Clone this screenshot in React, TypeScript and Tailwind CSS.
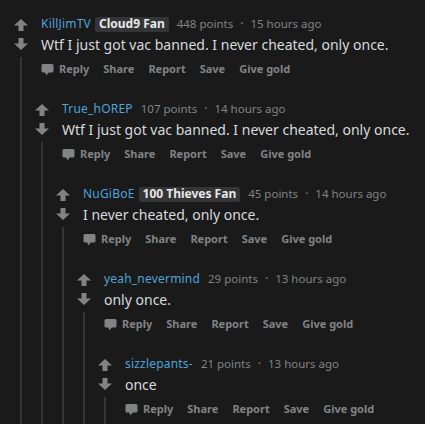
import React from "react";

type CommentData = {
  author: string;
  flair?: string;
  points: number;
  time: string;
  body: string;
  child?: CommentData;
};

const thread: CommentData = {
  author: "KillJimTV",
  flair: "Cloud9 Fan",
  points: 448,
  time: "15 hours ago",
  body: "Wtf I just got vac banned. I never cheated, only once.",
  child: {
    author: "True_hOREP",
    points: 107,
    time: "14 hours ago",
    body: "Wtf I just got vac banned. I never cheated, only once.",
    child: {
      author: "NuGiBoE",
      flair: "100 Thieves Fan",
      points: 45,
      time: "14 hours ago",
      body: "I never cheated, only once.",
      child: {
        author: "yeah_nevermind",
        points: 29,
        time: "13 hours ago",
        body: "only once.",
        child: {
          author: "sizzlepants-",
          points: 21,
          time: "13 hours ago",
          body: "once",
        },
      },
    },
  },
};

const UpArrow = () => (
  <svg width="14" height="12" viewBox="0 0 14 12" className="block">
    <path d="M7 0 L14 6.5 H9.5 V12 H4.5 V6.5 H0 Z" fill="#818384" />
  </svg>
);

const DownArrow = () => (
  <svg width="14" height="12" viewBox="0 0 14 12" className="block">
    <path d="M7 12 L14 5.5 H9.5 V0 H4.5 V5.5 H0 Z" fill="#818384" />
  </svg>
);

const ReplyIcon = () => (
  <svg width="13" height="13" viewBox="0 0 13 13" className="block">
    <rect x="0.5" y="1" width="12" height="8.5" rx="1.5" fill="#818384" />
    <path d="M4 9 H8 L5.5 12.5 Z" fill="#818384" />
  </svg>
);

const Comment = ({ data, last }: { data: CommentData; last?: boolean }) => {
  return (
    <div className="flex">
      <div className="w-[20px] shrink-0 flex flex-col items-center pt-[5px]">
        <UpArrow />
        <div className="mt-[7px]">
          <DownArrow />
        </div>
        <div className="mt-[7px] w-[2px] flex-1 bg-[#343536]" />
      </div>
      <div className="flex-1 min-w-0">
        <div className="pl-[10px] h-[20px] flex items-center text-[12px] whitespace-nowrap">
          <span className="text-[#4fa3d9] tracking-[0.2px]">{data.author}</span>
          {data.flair && (
            <span className="ml-[4px] px-[4px] h-[15px] flex items-center rounded-[2px] bg-[#343536] text-[#e8e8e8] font-bold">
              {data.flair}
            </span>
          )}
          <span className="ml-[8px] text-[11.5px] text-[#818384]">{data.points} points</span>
          <span className="mx-[7px] text-[#818384]">·</span>
          <span className="text-[11.5px] text-[#818384]">{data.time}</span>
        </div>
        <div className="pl-[10px] h-[20px] flex items-center text-[14px] text-[#d7dadc] whitespace-nowrap">
          {data.body}
        </div>
        <div className="pl-[10px] mt-[5px] h-[20px] flex items-center gap-[14px] text-[11px] font-bold text-[#818384] whitespace-nowrap">
          <span className="flex items-center gap-[5px]">
            <ReplyIcon />
            Reply
          </span>
          <span>Share</span>
          <span>Report</span>
          <span>Save</span>
          <span>Give gold</span>
        </div>
        {data.child ? (
          <div className="mt-[20px] ml-[1px]">
            <Comment data={data.child} last={!data.child.child} />
          </div>
        ) : (
          last && <div className="h-[40px]" />
        )}
      </div>
    </div>
  );
};

export default function App() {
  return (
    <div
      className="w-[425px] h-[424px] overflow-hidden bg-[#1a1a1b] pl-[11px] pt-[14px]"
      style={{ fontFamily: '"Noto Sans", "Open Sans", sans-serif' }}
    >
      <Comment data={thread} />
    </div>
  );
}
